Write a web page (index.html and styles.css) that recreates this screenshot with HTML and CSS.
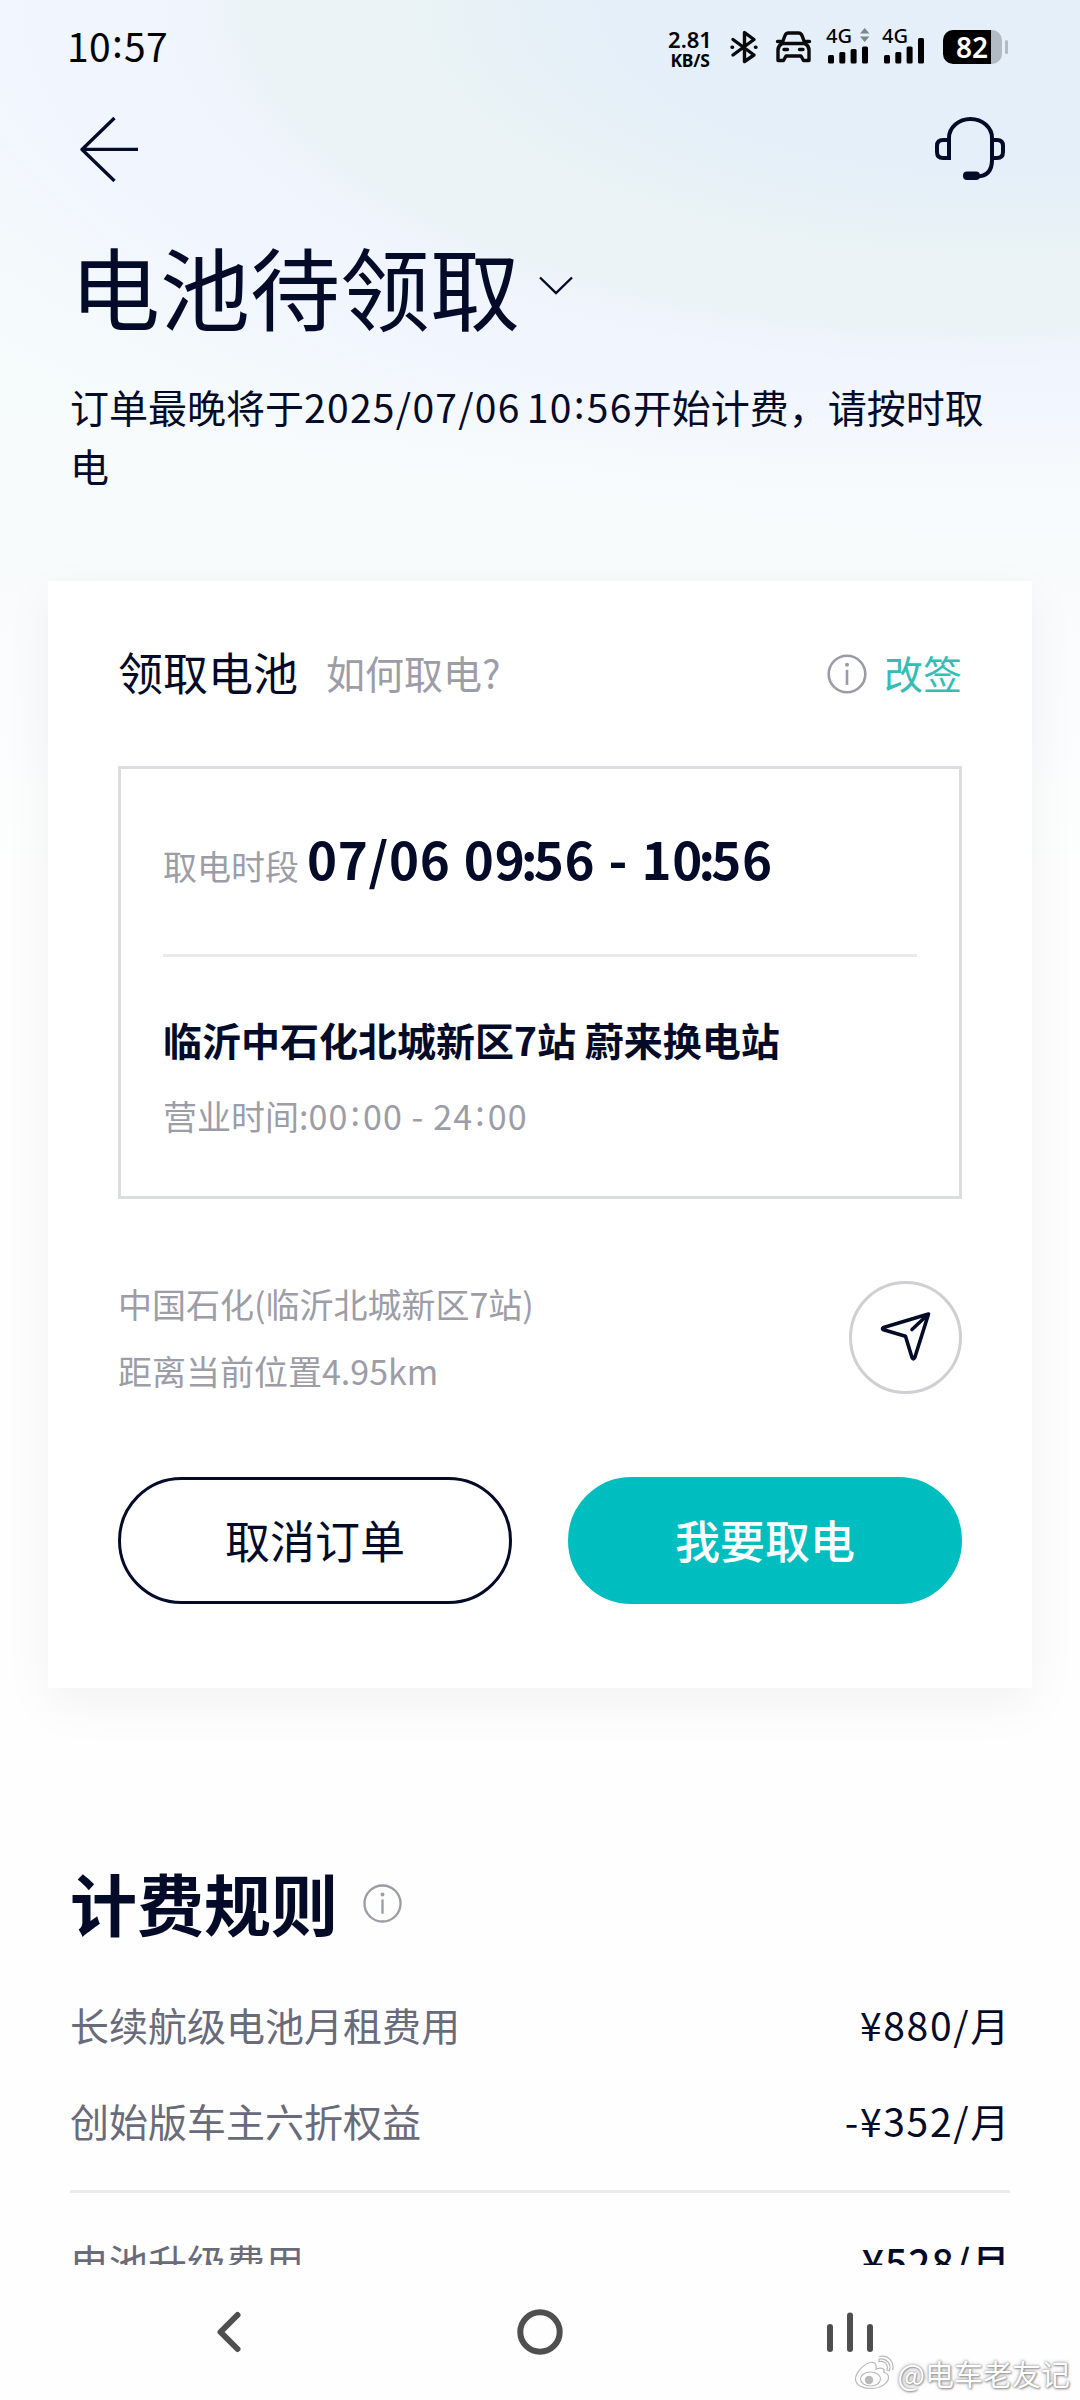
FILE: index.html
```html
<!DOCTYPE html>
<html lang="zh-CN">
<head>
<meta charset="utf-8">
<title>电池待领取</title>
<link rel="stylesheet" href="styles.css">
</head>
<body>
<div class="screen">
  <main class="page">
    <div class="status">
      <span class="clock">10<span class="colon">:</span>57</span>
      <div class="indicators">
        <div class="speed"><b class="rate">2.81</b><b class="unit">KB/S</b></div>
        <svg class="bt" width="28" height="34" viewBox="0 0 28 34" fill="none" stroke="#0a0a0c" stroke-width="3.4" stroke-linejoin="round" stroke-linecap="round"><path d="M3 9.5 24 25 14.5 31.500V2.500L24 9.500 3 25"/><path d="M2 17.300h.6M25.400 17.300h.6"/></svg>
        <svg class="car" width="37" height="32" viewBox="0 0 37 32" fill="none" stroke="#0a0a0c" stroke-width="3.400" stroke-linejoin="round" stroke-linecap="round"><path d="M7 12.500 10 4.500Q11 2 13.500 2H23.500Q26 2 27 4.500L30 12.500Q34 15 34 19V29.500H28.500L26 25H11L8.500 29.500H3V19Q3 15 7 12.500Z"/><path d="M7 12.500H30M2.500 10.500H6M31 10.500H34.500M9 18.500H12.500M24.500 18.500H28"/></svg>
        <div class="sig"><span class="net">4G</span>
          <svg width="44" height="37" viewBox="0 0 44 37"><g fill="#000"><rect x="2" y="28" width="6" height="8.500" rx="1.500"/><rect x="13.300" y="25" width="6" height="11.500" rx="1.500"/><rect x="24.600" y="22" width="6" height="14.500" rx="1.500"/><rect x="36" y="19.500" width="6" height="17" rx="1.500"/></g><path fill="#7d858e" d="M34 6.500 38.700 1l4.700 5.500zM34 9.500l4.700 5.500 4.700-5.500z"/></svg></div>
        <div class="sig"><span class="net">4G</span>
          <svg width="44" height="37" viewBox="0 0 44 37"><g fill="#000"><rect x="2" y="28" width="6" height="8.500" rx="1.500"/><rect x="13.300" y="25" width="6" height="11.500" rx="1.500"/><rect x="24.600" y="19.500" width="6" height="17" rx="1.500"/><rect x="36" y="11" width="6" height="25.500" rx="1.500"/></g></svg></div>
        <div class="battery"><span class="level">82</span></div>
        <span class="nub"></span>
      </div>
    </div>

    <header class="topbar">
      <svg width="60" height="66" viewBox="0 0 60 66" fill="none" stroke="#040b29" stroke-width="3.300" stroke-linejoin="round"><path d="M35.500 2 3 33.500 35.500 65M3 33.300H59"/></svg>
      <svg width="70" height="64" viewBox="0 0 70 64" fill="none" stroke="#040b29" stroke-width="4"><path d="M14 41V21A21.500 19 0 0 1 57 21V43Q57 59 42 59.500"/><path d="M14 23H8Q2 23 2 29V35Q2 41 8 41H14ZM57 23H62Q68 23 68 29V35Q68 41 62 41H57Z"/><rect x="28" y="54.500" width="17" height="8.500" rx="4" fill="#040b29" stroke="none"/></svg>
    </header>

    <section class="hero">
      <div class="headline"><h1>电池待领取</h1>
        <svg width="34" height="19" viewBox="0 0 34 19" fill="none" stroke="#040b29" stroke-width="2.400"><path d="M1 1.500 17 17 33 1.500"/></svg>
      </div>
      <p class="notice">订单最晚将于<span class="num">2025/07/06 10<span class="colon">:</span>56</span>开始计费，请按时取电</p>
    </section>

    <section class="card">
      <div class="card-head">
        <h2>领取电池</h2><a class="how">如何取电?</a>
        <svg class="info" width="40" height="40" viewBox="0 0 40 40" fill="none" stroke="#9b9ca6" stroke-width="2.600"><circle cx="20" cy="20" r="18.300"/><circle cx="20" cy="10.800" r="2" fill="#9b9ca6" stroke="none"/><path d="M20 15.800V31"/></svg>
        <a class="change">改签</a>
      </div>
      <div class="slot">
        <div class="period"><span class="label">取电时段</span><b>07/06 09<span class="tight">:</span>56 - 10<span class="tight">:</span>56</b></div>
        <hr>
        <h3>临沂中石化北城新区7站 蔚来换电站</h3>
        <p class="hours">营业时间:<span>00<span class="colon">:</span>00 - 24<span class="colon">:</span>00</span></p>
      </div>
      <div class="place">
        <div class="address"><p>中国石化(临沂北城新区7站)</p><p>距离当前位置<span>4.95km</span></p></div>
        <div class="navigate"><svg width="52" height="52" viewBox="0 0 52 52" fill="none" stroke="#040b29" stroke-width="3.600" stroke-linejoin="round" stroke-linecap="round"><path d="M48.500 3 3.500 16.500Q1.500 17.800 3.500 18.800L25.500 25.300 32 46.500Q33.300 49.300 34.800 46.500L48.500 3 32 18.500"/></svg></div>
      </div>
      <div class="actions">
        <button class="btn outline">取消订单</button>
        <button class="btn primary">我要取电</button>
      </div>
    </section>

    <section class="rules">
      <div class="rules-head"><h2>计费规则</h2>
        <svg class="info-rules" width="39" height="39" viewBox="0 0 40 40" fill="none" stroke="#9b9ca6" stroke-width="2.400"><circle cx="20" cy="20" r="18.500"/><circle cx="20" cy="10.800" r="2" fill="#9b9ca6" stroke="none"/><path d="M20 15.800V30.500"/></svg>
      </div>
      <div class="fee first"><span>长续航级电池月租费用</span><span class="price">¥880/月</span></div>
      <div class="fee second"><span>创始版车主六折权益</span><span class="price">-¥352/月</span></div>
      <hr>
      <div class="fee third"><span>电池升级费用</span><span class="price strong">¥528/月</span></div>
    </section>
  </main>

  <nav class="sysnav">
    <svg width="28" height="46" viewBox="0 0 28 46" fill="none" stroke="#4f4f4f" stroke-width="6" stroke-linecap="round" stroke-linejoin="round"><path d="M22.500 6 5.500 23 22.500 40"/></svg>
    <svg class="home" width="46" height="46" viewBox="0 0 46 46" fill="none" stroke="#4f4f4f" stroke-width="6"><circle cx="23" cy="23" r="19.700"/></svg>
    <svg width="48" height="46" viewBox="0 0 48 46" fill="none" stroke="#4f4f4f" stroke-width="6" stroke-linecap="round"><path d="M4 18V40M24 6.500V40M44 18V40"/></svg>
  </nav>

  <div class="watermark">
    <svg width="42" height="36" viewBox="0 0 42 36" fill="#fff" stroke="#b9b9b9" stroke-width="1.200"><path d="M17 7.500C11 8 1.500 17 1.500 24c0 6 7 9.500 15 9.500 11 0 18-6 18-11 0-3-2-4.500-4.500-5 1-4-2-5.500-8-3.500 1-4-.5-7-5-6.500z"/><path d="M25 6.500c6-1 9.500 3 8 8.500l2.500.5C37.500 8.500 32.500 3 25 4zM25 1.500c9-2 16 5 13.500 13.500"/><ellipse cx="16.500" cy="24" rx="10" ry="7"/><circle cx="15" cy="25" r="3.600" fill="#b9b9b9"/></svg>
    <span>@电车老友记</span>
  </div>
</div>
</body>
</html>
```
FILE: styles.css
```css
* { box-sizing: border-box; }
body, h1, h2, h3, p { margin: 0; }
body {
  width: 1080px;
  font-family: "Noto Sans CJK SC", sans-serif;
  font-weight: 400;
  color: #040b29;
  background: #fefefe;
}
svg { display: block; flex: none; }
hr { height: 3px; border: 0; margin: 0; background: #ebebec; }
.screen {
  position: relative;
  display: flex;
  flex-direction: column;
  height: 2400px;
  overflow: hidden;
}
.page {
  height: 2265px;
  flex: none;
  overflow: hidden;
  background:
    linear-gradient(180deg, rgba(249,251,252,0) 380px, #f8fbfc 560px, #fefefe 900px),
    radial-gradient(ellipse 800px 350px at 1000px 0, #e4eff9 0, #e4eff9 50%, #e9f2f5 70%, #ebf3f6 92%, #f1f5fe 105%, #f1f5fe 120%, #f4f9fc 142%, #f6fbfb 170%);
}

/* status bar */
.status {
  display: flex;
  justify-content: space-between;
  height: 94px;
  padding: 0 72px 0 67px;
}
.clock { font-size: 39px; line-height: 90px; letter-spacing: .3px; color: #000; }
.colon { padding: 0 1px; vertical-align: 4px; line-height: 0; }
.indicators { display: flex; align-items: flex-start; padding-top: 27px; }
.speed { display: flex; flex-direction: column; align-items: center; width: 46px; color: #000; margin-right: 17px; }
.rate { font: 600 22px/24px "Noto Sans", sans-serif; }
.unit { font: 700 17.500px/18px "Noto Sans", sans-serif; letter-spacing: -.3px; }
.bt { margin-top: 3px; }
.car { margin: 4px 0 0 17px; }
.sig { display: grid; margin-left: 14px; }
.sig + .sig { margin-left: 12px; }
.sig > * { grid-area: 1 / 1; }
.net { font: 500 20px/18px "Noto Sans", sans-serif; color: #000; }
.battery {
  width: 59px;
  height: 34px;
  margin: 3px 0 0 17px;
  border-radius: 10px;
  background: linear-gradient(90deg, #000 48px, #b2bac3 48px);
}
.level { display: block; padding-left: 13px; font: 600 28px/35px "Noto Sans", sans-serif; color: #fff; }
.nub { width: 3px; height: 14px; margin: 13px 0 0 3px; border-radius: 2px; background: #b2bac3; }

.topbar {
  display: flex;
  align-items: center;
  justify-content: space-between;
  height: 110px;
  padding: 0 75px 0 79px;
}

/* order state */
.hero { padding: 27px 70px 0; }
.headline { display: flex; align-items: center; gap: 19px; height: 108px; }
.headline h1 { font-size: 90px; line-height: 108px; font-weight: 400; }
.notice { margin-top: 38px; font-size: 39px; line-height: 58.500px; }
.num { letter-spacing: 1.300px; word-spacing: -4px; }

/* pickup card */
.card {
  margin: 87px 48px 0;
  padding: 61px 70px 84px;
  background: #fff;
  box-shadow: 0 16px 48px rgba(4, 20, 41, .05);
}
.card-head { display: flex; align-items: center; height: 60px; }
.card-head h2 { font-size: 45px; line-height: 60px; font-weight: 400; }
.how, .change { font-size: 39px; line-height: 60px; }
.how { margin-left: 28px; color: #9c9da6; }
.info { margin: 3px 0 0 auto; }
.change { margin-left: 17px; color: #35bdb4; }
.slot {
  margin-top: 64px;
  padding: 54px 42px 57px;
  border: 3px solid #dcdde0;
}
.period { display: flex; align-items: baseline; height: 70px; line-height: 70px; }
.label, .hours, .address { font-size: 34px; color: #9c9da6; }
.period b { margin-left: 8px; font-size: 51px; letter-spacing: .7px; word-spacing: 1px; }
.tight { margin: 0 -4.500px; }
.slot hr { margin-top: 61px; }
.slot h3 { margin-top: 54px; font-size: 39px; line-height: 56px; font-weight: 700; }
.hours { margin: 25px 0 -1px; line-height: 48px; }
.hours span { letter-spacing: 1.100px; }
.hours .colon { padding: 0 2px; }
.place { display: flex; align-items: center; justify-content: space-between; margin-top: 71px; }
.address p { line-height: 67px; }
.navigate {
  display: flex;
  align-items: center;
  justify-content: center;
  width: 113px;
  height: 113px;
  border: 3px solid #cfcfd4;
  border-radius: 50%;
}
.actions { display: flex; gap: 56px; margin-top: 73px; }
.btn {
  flex: 1;
  height: 127px;
  padding: 0 0 3px;
  border: 3px solid #040b29;
  border-radius: 64px;
  background: none;
  font-family: inherit;
  font-size: 45px;
  color: #040b29;
}
.btn.primary { border-color: #00bec0; background: #00bec0; color: #fff; font-weight: 500; }

/* billing rules */
.rules { padding: 174px 70px 0; }
.rules-head { display: flex; align-items: center; gap: 25px; height: 80px; }
.rules-head h2 { font-size: 67px; line-height: 80px; font-weight: 700; }
.info-rules { margin-top: 3px; }
.fee { display: flex; justify-content: space-between; font-size: 39px; line-height: 60px; color: #696b7a; }
.price { margin-right: -1px; letter-spacing: 1.700px; color: #040b29; }
.strong { font-weight: 500; letter-spacing: 1px; }
.first { margin-top: 52px; }
.second { margin-top: 36px; }
.rules hr { margin-top: 40px; }
.third { margin-top: 38px; }

/* system navigation */
.sysnav {
  display: flex;
  justify-content: space-between;
  align-items: flex-start;
  height: 135px;
  padding: 44px 206px 0 215px;
  background: #fefefe;
}
.home { margin-left: 10px; }
.watermark {
  position: absolute;
  right: 10px;
  bottom: 8px;
  display: flex;
  align-items: center;
  gap: 2px;
  font-size: 29px;
  line-height: 38px;
  color: #fff;
  text-shadow: 0 0 2px #888, 1px 1px 2px #999, 0 0 4px #bbb;
}
```
